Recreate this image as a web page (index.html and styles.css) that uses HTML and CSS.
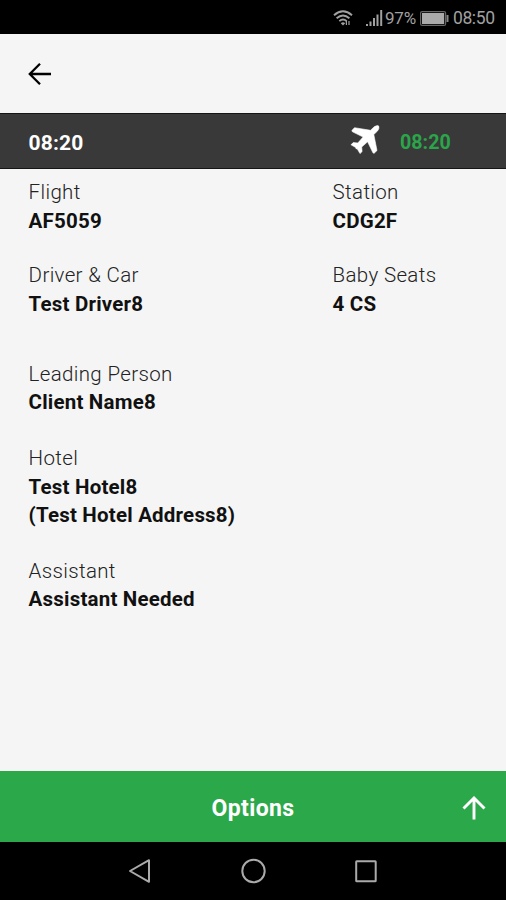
FILE: index.html
```html
<!DOCTYPE html>
<html lang="en">
<head>
  <meta charset="UTF-8" />
  <meta name="viewport" content="width=device-width, initial-scale=1.0" />
  <title>Transfer Details</title>
  <link rel="stylesheet" href="styles.css">
</head>
<body>
  <div class="status-bar">
    <svg class="wifi" width="20" height="18" viewBox="0 0 20 18" fill="none" stroke="currentColor" stroke-width="1.9">
      <path d="M1 6.2Q10-1.6 19 6.2M3.6 9.2Q10 3.6 16.4 9.2M6.3 12.1Q10 8.9 13.7 12.1" />
      <path d="M7.8 14.2Q10 12.5 12.2 14.2L10 16.5z" fill="currentColor" stroke="none" />
      <path d="M13.4 12v4M16 12v4" stroke-width="1.2" />
    </svg>
    <svg class="signal" width="17" height="17" viewBox="0 0 17 17" fill="currentColor">
      <path d="M0 14h2v2H0zM3.5 11.5h2V16h-2zM7 8h2v8H7zM10.5 4.5h2V16h-2zM14.2 0h2v16h-2z" />
    </svg>
    <span class="percent">97%</span>
    <svg class="battery" width="29" height="15" viewBox="0 0 29 15">
      <rect x=".6" y=".6" width="25" height="13.8" rx="1.5" fill="none" stroke="#666" stroke-width="1.2" />
      <rect x="2" y="2" width="22.2" height="11" fill="#aaa" />
      <path d="M26.5 4h2v7h-2z" fill="#888" />
    </svg>
    <span class="clock">08:50</span>
  </div>

  <header>
    <svg width="24" height="24" viewBox="0 0 24 24" fill="none" stroke="#000" stroke-width="2.3">
      <path d="M23 12H2.5M12 1.8L1.8 12 12 22.2" />
    </svg>
  </header>

  <div class="time-bar">
    <span class="pickup">08:20</span>
    <svg class="plane" width="30" height="30" viewBox="0 0 30 30" fill="#fff" stroke="#fff" stroke-width=".6" stroke-linejoin="round">
      <path d="M20.5 5.3L24.5 1.5Q28.5-.2 28.800 1.300Q29.5 3.5 27.5 6L23.8 9.6L27 25.5L24.2 28.2Q23.3 28.600 22.800 27.500L17.6 16.8L11.7 22L12.1 26.6L10 28.6L7.2 23.8Q5.5 24.3 5.7 22.5L1 19.8L3.2 17.6L7.8 18L13.1 12L2.5 6.8Q1.5 6 2.1 5.2L4.500 2.700z" />
    </svg>
    <span class="arrival">08:20</span>
  </div>

  <main>
    <div class="row">
      <div class="field">
        <p>Flight</p>
        <strong>AF5059</strong>
      </div>
      <div class="field">
        <p>Station</p>
        <strong>CDG2F</strong>
      </div>
    </div>
    <div class="row driver-row">
      <div class="field">
        <p>Driver &amp; Car</p>
        <strong>Test Driver8</strong>
      </div>
      <div class="field">
        <p>Baby Seats</p>
        <strong>4 CS</strong>
      </div>
    </div>
    <div class="field single">
      <p>Leading Person</p>
      <strong>Client Name8</strong>
    </div>
    <div class="field single">
      <p>Hotel</p>
      <strong>Test Hotel8</strong>
      <strong>(Test Hotel Address8)</strong>
    </div>
    <div class="field single">
      <p>Assistant</p>
      <strong>Assistant Needed</strong>
    </div>
  </main>

  <button class="options">
    <span></span>
    <span>Options</span>
    <svg width="24" height="24" viewBox="0 0 24 24" fill="none" stroke="#fff" stroke-width="2.9">
      <path d="M12 23.5V2.5M1.5 12.5L12 2 22.5 12.5" />
    </svg>
  </button>

  <nav>
    <svg width="24" height="26" viewBox="0 0 24 26"><path d="M2 13L21 2.2V23.800z" /></svg>
    <svg width="26" height="26" viewBox="0 0 26 26"><circle cx="13.5" cy="13" r="11.2" /></svg>
    <svg width="24" height="26" viewBox="0 0 24 26"><rect x="2.2" y="3.2" width="19.5" height="20" rx=".5" /></svg>
  </nav>
</body>
</html>
```

FILE: styles.css
```css
* {
  box-sizing: border-box;
}
body {
  margin: 0;
  height: 900px;
  display: flex;
  flex-direction: column;
  font-family: Roboto, sans-serif;
  background: #f5f5f5;
  color: #111;
}
svg {
  display: block;
  flex: none;
}
.status-bar {
  height: 34px;
  background: #000;
  color: #a0a0a0;
  display: flex;
  align-items: center;
  justify-content: flex-end;
  padding: 2px 11px 0 0;
  font-size: 18px;
}
.signal {
  margin: 0 2px 0 13px;
}
.percent {
  width: 31px;
  font-size: 17px;
  letter-spacing: -0.2px;
}
.battery {
  margin: 0 4px 0 4px;
}
.clock {
  width: 42px;
  font-size: 17.5px;
  letter-spacing: -0.4px;
}
header {
  height: 79px;
  display: flex;
  align-items: center;
  padding-left: 28px;
}
.time-bar {
  height: 56px;
  background: #393939;
  border-top: 1px solid #151515;
  border-bottom: 1px solid #151515;
  display: flex;
  align-items: center;
  padding: 3px 29px 0 28.5px;
  font-size: 21px;
  font-weight: bold;
  color: #fff;
}
.pickup {
  width: 321.5px;
  letter-spacing: 0.2px;
}
.plane {
  margin: -5px 20px 0 0;
}
.arrival {
  color: #2aa54a;
  font-size: 19.7px;
}
main {
  flex: 1;
  padding: 9.4px 28.6px 0;
  font-size: 20.5px;
  line-height: 28.5px;
}
.row {
  display: grid;
  grid-template-columns: 304px 1fr;
  margin-bottom: 26px;
}
.driver-row {
  margin-bottom: 41.5px;
}
.field p {
  margin: 0;
  color: #222;
  font-weight: 350;
  letter-spacing: 0.35px;
}
.field strong {
  display: block;
  letter-spacing: 0.2px;
}
.single {
  margin-bottom: 27.2px;
}
.options {
  height: 71px;
  border: none;
  background: #2ba84a;
  color: #fff;
  font: bold 23px Roboto, sans-serif;
  letter-spacing: 0.4px;
  display: grid;
  grid-template-columns: 24px 1fr 24px;
  align-items: center;
  padding: 3px 20px 0;
}
nav {
  height: 58px;
  background: #000;
  display: flex;
  align-items: center;
  justify-content: center;
  gap: 88px;
}
nav svg {
  fill: none;
  stroke: #aaa;
  stroke-width: 2;
  stroke-linejoin: round;
}
```
